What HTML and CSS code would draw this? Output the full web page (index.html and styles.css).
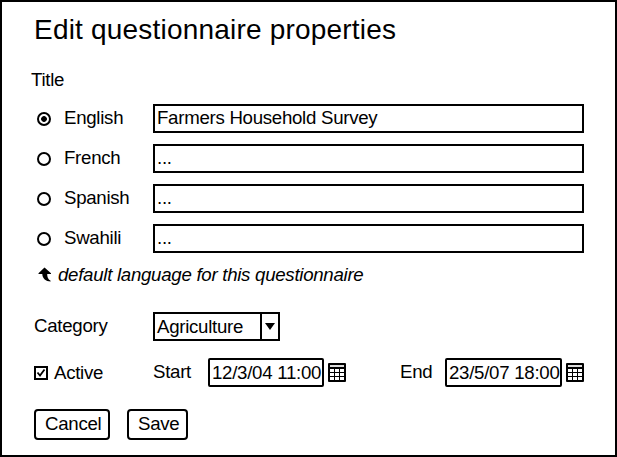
FILE: index.html
```html
<!DOCTYPE html>
<html lang="en">
<head>
<meta charset="utf-8">
<title>Edit questionnaire properties</title>
<link rel="stylesheet" href="styles.css">
</head>
<body>
<svg class="defs" width="0" height="0">
  <symbol id="calendar" viewBox="0 0 18 19">
    <rect width="18" height="19" rx="1" fill="#000"/>
    <rect x="2" y="2" width="14" height="2" fill="#ddd"/>
    <path fill="#fff" d="M2 6h4v3H2zM7 6h4v3H7zM12 6h4v3h-4zM2 10h4v3H2zM7 10h4v3H7zM12 10h4v3h-4zM2 14h4v3H2zM7 14h4v3H7zM12 14h4v3h-4z"/>
  </symbol>
</svg>
<main class="dialog">
  <h1 class="heading">Edit questionnaire properties</h1>
  <div class="subtitle">Title</div>
  <div class="languages">
    <div class="language"><span class="radio checked"></span><span>English</span><div class="field">Farmers Household Survey</div></div>
    <div class="language"><span class="radio"></span><span>French</span><div class="field">...</div></div>
    <div class="language"><span class="radio"></span><span>Spanish</span><div class="field">...</div></div>
    <div class="language"><span class="radio"></span><span>Swahili</span><div class="field">...</div></div>
  </div>
  <div class="hint">
    <svg width="14" height="15" viewBox="0 0 14 15"><path d="M6.500 0.500 13 6.200v.8H9.200c0 3 .6 5 3.400 6.800v.7C8 14.500 4.300 11.500 4.300 7H.5v-.8z"/></svg>
    <span>default language for this questionnaire</span>
  </div>
  <div class="category">
    <span class="label">Category</span>
    <div class="select"><span class="value">Agriculture</span><span class="drop"><svg width="10" height="7" viewBox="0 0 10 7"><path d="M0 0h10L5 7z"/></svg></span></div>
  </div>
  <div class="schedule">
    <svg class="check" width="14" height="14" viewBox="0 0 14 14"><rect x="1" y="1" width="12" height="12" fill="none" stroke="#000" stroke-width="2"/><path d="M3.500 6.500 6 9.500 10.500 3.500" fill="none" stroke="#000" stroke-width="1.800"/></svg>
    <span class="active">Active</span>
    <span class="start">Start</span>
    <div class="date">12/3/04 11:00</div>
    <svg class="cal" width="18" height="19"><use href="#calendar"/></svg>
    <span class="end">End</span>
    <div class="date last">23/5/07 18:00</div>
    <svg class="cal" width="18" height="19"><use href="#calendar"/></svg>
  </div>
  <div class="actions">
    <div class="button cancel">Cancel</div>
    <div class="button save">Save</div>
  </div>
</main>
</body>
</html>
```
FILE: styles.css
```css
* { box-sizing: border-box; }
body {
  margin: 0;
  background: #fff;
  color: #000;
  font: 18.67px/29px "Liberation Sans", Arial, sans-serif;
  letter-spacing: -0.28px;
  white-space: nowrap;
}
.defs { display: none; }
svg { display: block; flex: none; }
.dialog {
  width: 617px;
  height: 457px;
  border: 2px solid #000;
  padding: 10px 31px 0 29px;
  overflow: hidden;
}
.heading {
  margin: 0 0 0 3px;
  height: 36px;
  font-size: 28px;
  line-height: 36px;
  font-weight: normal;
  letter-spacing: 0.2px;
}
.subtitle { margin-top: 17px; height: 29px; }
.languages { display: grid; gap: 11px; margin-top: 10px; }
.language {
  display: grid;
  grid-template-columns: 33px 89px 431px;
  height: 29px;
  line-height: 27px;
}
.radio {
  width: 14px;
  height: 14px;
  margin: 8px 0 0 6px;
  border: 2px solid #000;
  border-radius: 50%;
}
.checked { background: radial-gradient(circle, #000 2.500px, transparent 3.200px); }
.field {
  height: 29px;
  border: 2px solid #000;
  padding-left: 2px;
  line-height: 23px;
}
.hint {
  display: flex;
  gap: 6px;
  height: 29px;
  margin: 8px 0 0 7px;
  font-style: italic;
  line-height: 27px;
}
.hint svg { margin-top: 6px; }
.category { display: flex; height: 29px; margin: 22px 0 0 3px; }
.label { width: 119px; line-height: 28px; }
.select {
  display: flex;
  width: 127px;
  border: 2px solid #000;
  line-height: 26px;
  padding-left: 2px;
}
.value { flex: 1; }
.drop { width: 18px; border-left: 2px solid #000; padding: 9px 0 0 3px; }
.schedule { display: flex; height: 29px; margin: 17px 0 0 3px; }
.check { margin: 8px 6px 0 0; }
.active { width: 99px; }
.start { width: 55px; line-height: 28px; }
.date {
  width: 116px;
  height: 29px;
  border: 2px solid #000;
  border-radius: 2px;
  padding-left: 2px;
  line-height: 25px;
}
.last { width: 117px; }
.cal { margin: 5px 0 0 4px; }
.end { width: 45px; margin-left: 54px; line-height: 28px; }
.actions { display: flex; gap: 17px; margin: 22px 0 0 3px; }
.button {
  height: 31px;
  border: 2px solid #000;
  border-radius: 4px;
  padding-left: 9px;
  line-height: 25px;
}
.cancel { width: 76px; }
.save { width: 61px; }
```
